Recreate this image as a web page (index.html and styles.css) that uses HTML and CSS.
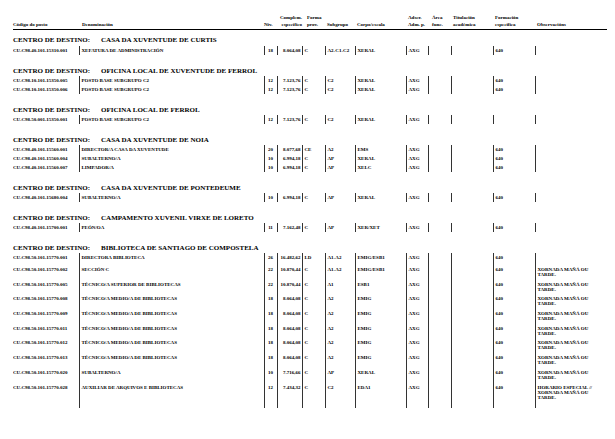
FILE: index.html
```html
<!DOCTYPE html>
<html lang="gl">
<head>
<meta charset="utf-8">
<title>Relación de postos</title>
<link rel="stylesheet" href="styles.css">
</head>
<body>
<div class="page">
<table class="rpt">
<colgroup>
<col class="c-code"><col class="c-den"><col class="c-niv"><col class="c-comp"><col class="c-forma"><col class="c-sub"><col class="c-corpo"><col class="c-adscr"><col class="c-area"><col class="c-tit"><col class="c-form"><col class="c-obs">
</colgroup>
<thead>
<tr class="hdr">
<th class="h-code">Código do posto</th>
<th class="h-den">Denominación</th>
<th class="h-niv">Nív.</th>
<th class="h-comp">Complem.<br>específico</th>
<th class="h-forma">Forma<br>prov.</th>
<th>Subgrupo</th>
<th>Corpo/escala</th>
<th>Adscr.<br>Adm. p.</th>
<th class="h-area">Área<br>func.</th>
<th>Titulación<br>académica</th>
<th>Formación<br>específica</th>
<th>Observacións</th>
</tr>
</thead>
<tbody>
<tr class="sec first"><td colspan="12"><span class="lbl">CENTRO DE DESTINO:</span>CASA DA XUVENTUDE DE CURTIS</td></tr>
<tr class="row"><td>CU.C98.40.101.15310.001</td><td>XEFATURA DE ADMINISTRACIÓN</td><td class="niv">18</td><td class="num">8.064,08</td><td>C</td><td>A2-C1-C2</td><td>XERAL</td><td>AXG</td><td></td><td></td><td>640</td><td></td></tr>

<tr class="sec"><td colspan="12"><span class="lbl">CENTRO DE DESTINO:</span>OFICINA LOCAL DE XUVENTUDE DE FERROL</td></tr>
<tr class="row"><td>CU.C98.10.101.15350.005</td><td>POSTO BASE SUBGRUPO C2</td><td class="niv">12</td><td class="num">7.123,76</td><td>C</td><td>C2</td><td>XERAL</td><td>AXG</td><td></td><td></td><td>640</td><td></td></tr>
<tr class="row"><td>CU.C98.10.101.15350.006</td><td>POSTO BASE SUBGRUPO C2</td><td class="niv">12</td><td class="num">7.123,76</td><td>C</td><td>C2</td><td>XERAL</td><td>AXG</td><td></td><td></td><td>640</td><td></td></tr>

<tr class="sec"><td colspan="12"><span class="lbl">CENTRO DE DESTINO:</span>OFICINA LOCAL DE FERROL</td></tr>
<tr class="row"><td>CU.C98.50.001.15350.001</td><td>POSTO BASE SUBGRUPO C2</td><td class="niv">12</td><td class="num">7.123,76</td><td>C</td><td>C2</td><td>XERAL</td><td>AXG</td><td></td><td></td><td></td><td></td></tr>

<tr class="sec"><td colspan="12"><span class="lbl">CENTRO DE DESTINO:</span>CASA DA XUVENTUDE DE NOIA</td></tr>
<tr class="row"><td>CU.C98.40.101.15560.001</td><td>DIRECTOR/A CASA DA XUVENTUDE</td><td class="niv">20</td><td class="num">8.077,68</td><td>CE</td><td>A2</td><td>EMS</td><td>AXG</td><td></td><td></td><td>640</td><td></td></tr>
<tr class="row"><td>CU.C98.40.101.15560.004</td><td>SUBALTERNO/A</td><td class="niv">10</td><td class="num">6.994,18</td><td>C</td><td>AP</td><td>XERAL</td><td>AXG</td><td></td><td></td><td>640</td><td></td></tr>
<tr class="row"><td>CU.C98.40.101.15560.007</td><td>LIMPADOR/A</td><td class="niv">10</td><td class="num">6.994,18</td><td>C</td><td>AP</td><td>XELC</td><td>AXG</td><td></td><td></td><td>640</td><td></td></tr>

<tr class="sec"><td colspan="12"><span class="lbl">CENTRO DE DESTINO:</span>CASA DA XUVENTUDE DE PONTEDEUME</td></tr>
<tr class="row"><td>CU.C98.40.101.15680.004</td><td>SUBALTERNO/A</td><td class="niv">10</td><td class="num">6.994,18</td><td>C</td><td>AP</td><td>XERAL</td><td>AXG</td><td></td><td></td><td>640</td><td></td></tr>

<tr class="sec"><td colspan="12"><span class="lbl">CENTRO DE DESTINO:</span>CAMPAMENTO XUVENIL VIRXE DE LORETO</td></tr>
<tr class="row"><td>CU.C98.40.101.15700.001</td><td>PEÓN/OA</td><td class="niv">11</td><td class="num">7.162,48</td><td>C</td><td>AP</td><td>XER/XET</td><td>AXG</td><td></td><td></td><td>640</td><td></td></tr>

<tr class="sec"><td colspan="12"><span class="lbl">CENTRO DE DESTINO:</span>BIBLIOTECA DE SANTIAGO DE COMPOSTELA</td></tr>
<tr class="row mid"><td>CU.C98.50.101.15770.001</td><td>DIRECTORA BIBLIOTECA</td><td class="niv">26</td><td class="num">16.482,62</td><td>LD</td><td>A1-A2</td><td>EMIG/ESB1</td><td>AXG</td><td></td><td></td><td>640</td><td></td></tr>
<tr class="row tall"><td>CU.C98.50.101.15770.002</td><td>SECCIÓN C</td><td class="niv">22</td><td class="num">10.870,44</td><td>C</td><td>A1-A2</td><td>EMIG/ESB1</td><td>AXG</td><td></td><td></td><td>640</td><td>XORNADA MAÑÁ OU TARDE.</td></tr>
<tr class="row tall"><td>CU.C98.50.101.15770.005</td><td>TÉCNICO/A SUPERIOR DE BIBLIOTECAS</td><td class="niv">22</td><td class="num">10.870,44</td><td>C</td><td>A1</td><td>ESB1</td><td>AXG</td><td></td><td></td><td>640</td><td>XORNADA MAÑÁ OU TARDE.</td></tr>
<tr class="row tall"><td>CU.C98.50.101.15770.008</td><td>TÉCNICO/A MEDIO/A DE BIBLIOTECAS</td><td class="niv">18</td><td class="num">8.064,08</td><td>C</td><td>A2</td><td>EMIG</td><td>AXG</td><td></td><td></td><td>640</td><td>XORNADA MAÑÁ OU TARDE.</td></tr>
<tr class="row tall"><td>CU.C98.50.101.15770.009</td><td>TÉCNICO/A MEDIO/A DE BIBLIOTECAS</td><td class="niv">18</td><td class="num">8.064,08</td><td>C</td><td>A2</td><td>EMIG</td><td>AXG</td><td></td><td></td><td>640</td><td>XORNADA MAÑÁ OU TARDE.</td></tr>
<tr class="row tall"><td>CU.C98.50.101.15770.011</td><td>TÉCNICO/A MEDIO/A DE BIBLIOTECAS</td><td class="niv">18</td><td class="num">8.064,08</td><td>C</td><td>A2</td><td>EMIG</td><td>AXG</td><td></td><td></td><td>640</td><td>XORNADA MAÑÁ OU TARDE.</td></tr>
<tr class="row tall"><td>CU.C98.50.101.15770.012</td><td>TÉCNICO/A MEDIO/A DE BIBLIOTECAS</td><td class="niv">18</td><td class="num">8.064,08</td><td>C</td><td>A2</td><td>EMIG</td><td>AXG</td><td></td><td></td><td>640</td><td>XORNADA MAÑÁ OU TARDE.</td></tr>
<tr class="row tall"><td>CU.C98.50.101.15770.013</td><td>TÉCNICO/A MEDIO/A DE BIBLIOTECAS</td><td class="niv">18</td><td class="num">8.064,08</td><td>C</td><td>A2</td><td>EMIG</td><td>AXG</td><td></td><td></td><td>640</td><td>XORNADA MAÑÁ OU TARDE.</td></tr>
<tr class="row tall"><td>CU.C98.50.101.15770.020</td><td>SUBALTERNO/A</td><td class="niv">10</td><td class="num">7.716,66</td><td>C</td><td>AP</td><td>XERAL</td><td>AXG</td><td></td><td></td><td>640</td><td>XORNADA MAÑÁ OU TARDE.</td></tr>
<tr class="row tall last"><td>CU.C98.50.101.15770.028</td><td>AUXILIAR DE ARQUIVOS E BIBLIOTECAS</td><td class="niv">12</td><td class="num">7.434,32</td><td>C</td><td>C2</td><td>EDA1</td><td>AXG</td><td></td><td></td><td>640</td><td>HORARIO ESPECIAL // XORNADA MAÑÁ OU TARDE.</td></tr>
</tbody>
</table>
</div>
</body>
</html>
```
FILE: styles.css
```css
html, body {
  margin: 0;
  padding: 0;
  background: #ffffff;
}

.page {
  padding: 14px 0 0 13px;
  font-family: "Liberation Serif", "Times New Roman", serif;
  font-weight: bold;
  color: #000;
}

.rpt {
  border-collapse: collapse;
  table-layout: fixed;
  width: 594px;
}

.c-code { width: 66px; }
.c-den { width: 185px; }
.c-niv { width: 13px; }
.c-comp { width: 25px; }
.c-forma { width: 23px; }
.c-sub { width: 30px; }
.c-corpo { width: 51px; }
.c-adscr { width: 22px; }
.c-area { width: 23px; }
.c-tit { width: 42px; }
.c-form { width: 42px; }
.c-obs { width: 72px; }

.hdr th {
  font-size: 5px;
  line-height: 7px;
  font-weight: bold;
  text-align: left;
  vertical-align: bottom;
  padding: 0 0 1px 2px;
  white-space: nowrap;
  border-bottom: 1px solid #000;
}

.hdr .h-code { padding-left: 0; }
.hdr .h-den { padding-left: 3px; }
.hdr .h-niv { padding-left: 0; }
.hdr .h-comp { text-align: right; padding-left: 0; padding-right: 0; }
.hdr .h-forma { padding-left: 5px; }
.hdr .h-area { padding-left: 4px; }

.sec td {
  font-size: 7px;
  line-height: 8px;
  padding: 12px 0 1px 0;
  white-space: nowrap;
}

.sec.first td { padding: 6px 0 2px 0; }

.sec .lbl { margin-right: 11px; }

.row td {
  font-size: 5px;
  line-height: 5px;
  padding: 2px 0 2px 2px;
  vertical-align: top;
  white-space: nowrap;
  overflow: hidden;
  border-left: 1px solid #333;
}

.row td:first-child {
  border-left: none;
  padding-left: 0;
}

.row td.niv {
  text-align: center;
  padding-left: 0;
}

.row td.num {
  text-align: right;
  padding-left: 0;
  padding-right: 1px;
}

.row td:last-child {
  white-space: normal;
  padding-right: 10px;
}

.row.mid td { padding-bottom: 5px; }
.row.tall td { height: 10px; padding-bottom: 2.7px; }
.row.last td { height: 15px; padding-bottom: 8.4px; }
```
